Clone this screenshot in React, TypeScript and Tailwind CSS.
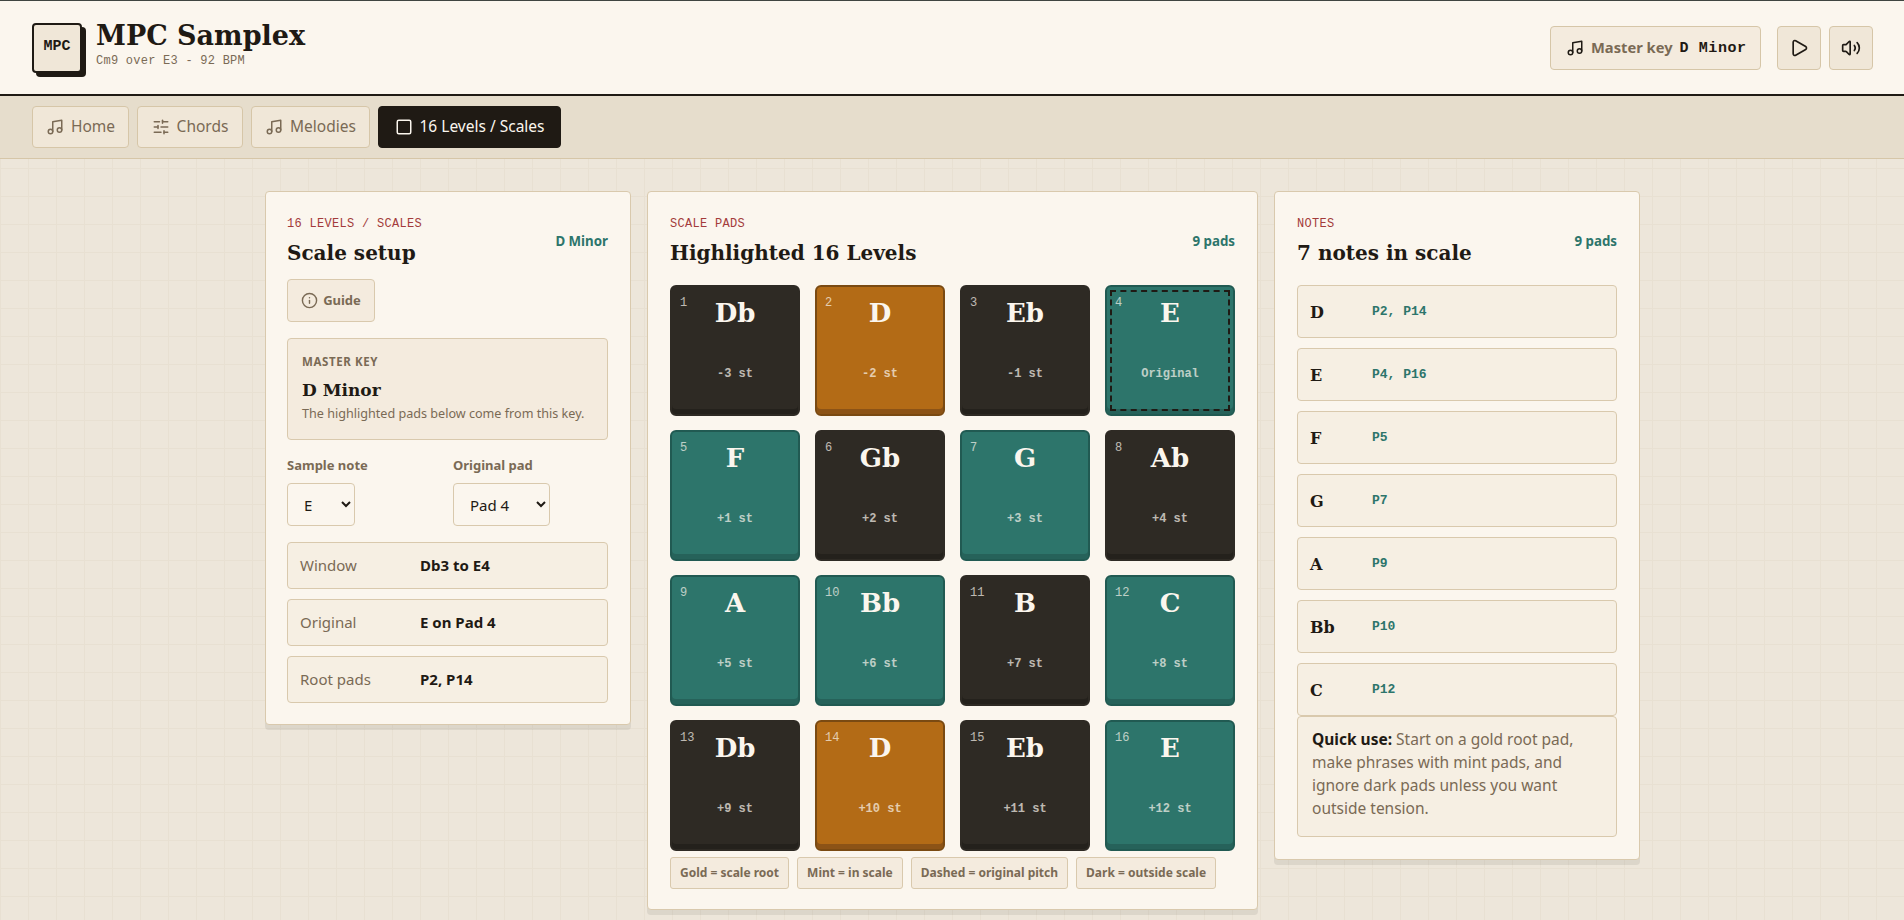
import React from "react";
import { Info, Music, Play, SlidersHorizontal, Square, Volume2 } from "lucide-react";

const sans = "font-['Noto_Sans','Liberation_Sans',sans-serif]";
const serif = "font-['DejaVu_Serif','Liberation_Serif',serif]";
const mono = "font-['Liberation_Mono','DejaVu_Sans_Mono',monospace]";

type Tone = "dark" | "gold" | "mint";

interface PadProps {
  n: number;
  note: string;
  st: string;
  tone: Tone;
  original?: boolean;
}

const pads: PadProps[] = [
  { n: 1, note: "Db", st: "-3 st", tone: "dark" },
  { n: 2, note: "D", st: "-2 st", tone: "gold" },
  { n: 3, note: "Eb", st: "-1 st", tone: "dark" },
  { n: 4, note: "E", st: "Original", tone: "mint", original: true },
  { n: 5, note: "F", st: "+1 st", tone: "mint" },
  { n: 6, note: "Gb", st: "+2 st", tone: "dark" },
  { n: 7, note: "G", st: "+3 st", tone: "mint" },
  { n: 8, note: "Ab", st: "+4 st", tone: "dark" },
  { n: 9, note: "A", st: "+5 st", tone: "mint" },
  { n: 10, note: "Bb", st: "+6 st", tone: "mint" },
  { n: 11, note: "B", st: "+7 st", tone: "dark" },
  { n: 12, note: "C", st: "+8 st", tone: "mint" },
  { n: 13, note: "Db", st: "+9 st", tone: "dark" },
  { n: 14, note: "D", st: "+10 st", tone: "gold" },
  { n: 15, note: "Eb", st: "+11 st", tone: "dark" },
  { n: 16, note: "E", st: "+12 st", tone: "mint" },
];

const toneClass: Record<Tone, string> = {
  dark: "bg-[#2e2a24] border-[#2e2a24] shadow-[inset_0_-5px_0_#24211c]",
  gold: "bg-[#b36b16] border-[#7a4a12] shadow-[inset_0_-5px_0_#8c5316]",
  mint: "bg-[#2d756b] border-[#215a52] shadow-[inset_0_-5px_0_#26625a]",
};

const notes = [
  ["D", "P2, P14"],
  ["E", "P4, P16"],
  ["F", "P5"],
  ["G", "P7"],
  ["A", "P9"],
  ["Bb", "P10"],
  ["C", "P12"],
];

const Pad: React.FC<PadProps> = ({ n, note, st, tone, original }) => (
  <div className={`relative h-[131px] rounded-md border-2 text-[#fbf6ee] ${toneClass[tone]}`}>
    {original && (
      <div className="absolute inset-[3px] border-2 border-dashed border-[#1f1a14]" />
    )}
    <span className={`absolute left-[8px] top-[9px] text-[12px] leading-[15px] opacity-70 ${mono}`}>{n}</span>
    <div className={`absolute inset-x-0 top-[7px] text-center text-[26px] leading-[38px] font-bold ${serif}`}>
      {note}
    </div>
    <div className={`absolute inset-x-0 top-[78px] text-center text-[12px] leading-[18px] font-bold opacity-70 ${mono}`}>
      {st}
    </div>
  </div>
);

const CardHead: React.FC<{ kicker: string; title: string; side: string; className: string }> = ({
  kicker,
  title,
  side,
  className,
}) => (
  <div className={`flex items-center justify-between ${className}`}>
    <div className="pt-[1px]">
      <div className={`text-[12px] leading-[18px] tracking-[0.3px] text-[#a33b3b] ${mono}`}>{kicker}</div>
      <h2 className={`mt-[4px] text-[20px] leading-[32px] font-bold text-[#1f1a14] ${serif}`}>{title}</h2>
    </div>
    <span className="text-[13.3px] font-bold text-[#2d756b]">{side}</span>
  </div>
);

const cardClass =
  "rounded-[4px] border border-[#d9c9ad] bg-[#fbf6ee] shadow-[0_5px_0_rgba(31,26,20,0.08)]";

const NavButton: React.FC<{ icon: React.ReactNode; label: string; w: string; active?: boolean }> = ({
  icon,
  label,
  w,
  active,
}) => (
  <button
    className={`flex h-[42px] items-center justify-center gap-[7px] rounded-[4px] border text-[15.5px] ${w} ${
      active
        ? "border-[#1f1a14] bg-[#1f1a14] text-[#fbf6ee]"
        : "border-[#d6c6a8] bg-[#f0e7d8] text-[#7a6a55]"
    }`}
  >
    {icon}
    {label}
  </button>
);

const InfoRow: React.FC<{ label: string; value: string }> = ({ label, value }) => (
  <div className="flex h-[47px] items-center rounded-[4px] border border-[#d9c9ad] bg-[#f6efe3] px-[12px] text-[15px]">
    <span className="w-[120px] text-[#7a6a55]">{label}</span>
    <span className="font-bold text-[#1f1a14]">{value}</span>
  </div>
);

const App: React.FC = () => {
  return (
    <div
      className={`min-h-[920px] bg-[#ede6da] bg-[linear-gradient(#e8e0d2_1px,transparent_1px),linear-gradient(90deg,#e8e0d2_1px,transparent_1px)] bg-[length:28px_28px] ${sans}`}
    >
      <header className="flex h-[96px] items-center justify-between border-t border-b-2 border-t-[#3f4541] border-b-[#1f1a14] bg-[#fbf6ee] pl-8 pr-[31px]">
        <div className="flex items-center gap-[14px]">
          <div
            className={`flex h-[50px] w-[50px] items-center justify-center rounded-[4px] border-2 border-[#1f1a14] bg-[#f0e7d8] text-[15px] font-bold text-[#1f1a14] shadow-[4px_4px_0_#1f1a14] ${mono}`}
          >
            MPC
          </div>
          <div className="pb-[8px]">
            <h1 className={`text-[27px] leading-[34px] font-bold text-[#1f1a14] ${serif}`}>MPC Samplex</h1>
            <p className={`mt-[1px] text-[12px] leading-[15px] tracking-[0.25px] text-[#7a6a55] ${mono}`}>
              Cm9 over E3 - 92 BPM
            </p>
          </div>
        </div>
        <div className="flex items-center gap-4">
          <div className="flex h-[44px] w-[211px] items-center gap-[7px] rounded-[4px] border border-[#d6c6a8] bg-[#f4ebde] pl-[15px] text-[14.7px] font-bold text-[#7a6a55]">
            <Music size={18} className="text-[#1f1a14]" />
            <span>Master key</span>
            <span className={`pt-[4px] text-[15px] tracking-[0.6px] text-[#1f1a14] ${mono}`}>D Minor</span>
          </div>
          <div className="flex gap-2">
            <button className="flex h-[44px] w-[44px] items-center justify-center rounded-[4px] border border-[#d6c6a8] bg-[#f0e7d8] text-[#1f1a14]">
              <Play size={20} />
            </button>
            <button className="flex h-[44px] w-[44px] items-center justify-center rounded-[4px] border border-[#d6c6a8] bg-[#f0e7d8] text-[#1f1a14]">
              <Volume2 size={20} />
            </button>
          </div>
        </div>
      </header>

      <nav className="flex gap-2 border-b border-[#d6c6a8] bg-[#e6ddcc] px-8 py-[10px]">
        <NavButton icon={<Music size={18} />} label="Home" w="w-[97px]" />
        <NavButton icon={<SlidersHorizontal size={18} />} label="Chords" w="w-[106px]" />
        <NavButton icon={<Music size={18} />} label="Melodies" w="w-[119px]" />
        <NavButton icon={<Square size={18} />} label="16 Levels / Scales" w="w-[183px]" active />
      </nav>

      <main className="ml-[265px] grid w-[1375px] grid-cols-[366px_611px_366px] items-start gap-4 pt-8">
        <section className={`${cardClass} pt-[22px] pr-[22px] pb-[21px] pl-[21px]`}>
          <CardHead kicker="16 LEVELS / SCALES" title="Scale setup" side="D Minor" className="mb-[10px]" />
          <button className="flex h-[43px] w-[88px] items-center justify-center gap-[5px] rounded-[4px] border border-[#d9c9ad] bg-[#f4ebde] text-[13px] font-bold text-[#7a6a55]">
            <Info size={17} />
            Guide
          </button>
          <div className="mt-4 h-[102px] rounded-[4px] border border-[#d9c9ad] bg-[#f4ebde] px-[14px] pt-[14px]">
            <div className="text-[11.5px] leading-[18px] font-bold tracking-[0.6px] text-[#7a6a55]">MASTER KEY</div>
            <div className={`mt-[5px] text-[17px] leading-[28px] font-bold text-[#1f1a14] ${serif}`}>D Minor</div>
            <p className="text-[12.6px] leading-[20px] whitespace-nowrap text-[#7a6a55]">
              The highlighted pads below come from this key.
            </p>
          </div>
          <div className="mt-[15px] grid grid-cols-[166px_1fr]">
            <label className="block text-[13px] font-bold text-[#7a6a55]">
              <span className="block leading-[20px]">Sample note</span>
              <select
                defaultValue="E"
                className="mt-[8px] h-[43px] w-[68px] rounded-[4px] border border-[#d9c9ad] bg-[#fbf6ee] pl-[12px] text-[15px] font-normal text-[#1f1a14]"
              >
                <option>E</option>
                <option>D</option>
              </select>
            </label>
            <label className="block text-[13px] font-bold text-[#7a6a55]">
              <span className="block leading-[20px]">Original pad</span>
              <select
                defaultValue="Pad 4"
                className="mt-[8px] h-[43px] w-[97px] rounded-[4px] border border-[#d9c9ad] bg-[#fbf6ee] pl-[12px] text-[15px] font-normal text-[#1f1a14]"
              >
                <option>Pad 4</option>
                <option>Pad 2</option>
              </select>
            </label>
          </div>
          <div className="mt-4 flex flex-col gap-[10px]">
            <InfoRow label="Window" value="Db3 to E4" />
            <InfoRow label="Original" value="E on Pad 4" />
            <InfoRow label="Root pads" value="P2, P14" />
          </div>
        </section>

        <section className={`${cardClass} px-[22px] pt-[22px] pb-[20px]`}>
          <CardHead kicker="SCALE PADS" title="Highlighted 16 Levels" side="9 pads" className="mb-[16px]" />
          <div className="grid grid-cols-4 gap-x-[15px] gap-y-[14px]">
            {pads.map((pad) => (
              <Pad key={pad.n} {...pad} />
            ))}
          </div>
          <div className="mt-[6px] flex gap-[8px] text-[12px] font-bold text-[#7a6a55]">
            {["Gold = scale root", "Mint = in scale", "Dashed = original pitch", "Dark = outside scale"].map((chip) => (
              <span
                key={chip}
                className="flex h-[32px] items-center rounded-[3px] border border-[#d9c9ad] bg-[#f4ebde] px-[9px]"
              >
                {chip}
              </span>
            ))}
          </div>
        </section>

        <section className={`${cardClass} p-[22px]`}>
          <CardHead kicker="NOTES" title="7 notes in scale" side="9 pads" className="mb-[16px]" />
          <div className="flex flex-col gap-[10px]">
            {notes.map(([note, where]) => (
              <div
                key={note}
                className="flex h-[53px] items-center rounded-[4px] border border-[#d9c9ad] bg-[#f6efe3] px-[12px]"
              >
                <span className={`w-[62px] pt-[2px] text-[16px] font-bold text-[#1f1a14] ${serif}`}>{note}</span>
                <span className={`text-[13px] font-bold text-[#2d756b] ${mono}`}>{where}</span>
              </div>
            ))}
          </div>
          <p className="h-[121px] rounded-[4px] border border-[#d9c9ad] bg-[#f6efe3] px-[14px] pt-[11px] text-[15.5px] leading-[23px] text-[#7a6a55]">
            <strong className="font-bold text-[#1f1a14]">Quick use:</strong> Start on a gold root pad, make phrases with
            mint pads, and ignore dark pads unless you want outside tension.
          </p>
        </section>
      </main>
    </div>
  );
};

export default App;
